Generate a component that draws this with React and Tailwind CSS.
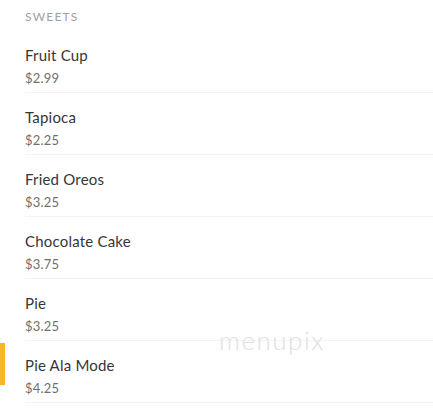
import React from 'react';

const items = [
  { name: 'Fruit Cup', price: '$2.99' },
  { name: 'Tapioca', price: '$2.25' },
  { name: 'Fried Oreos', price: '$3.25' },
  { name: 'Chocolate Cake', price: '$3.75' },
  { name: 'Pie', price: '$3.25' },
  { name: 'Pie Ala Mode', price: '$4.25', active: true },
];

const App = () => {
  return (
    <div
      className="relative w-[433px] h-[412px] overflow-hidden bg-white"
      style={{ fontFamily: 'Lato, "Open Sans", sans-serif' }}
    >
      <div className="h-[31px] pl-[25px] pt-[3px]">
        <span className="text-[12px] leading-[16px] tracking-[1.2px] text-[#a0a0a0] uppercase">Sweets</span>
      </div>
      {items.map((item) => (
        <div key={item.name} className="relative pl-[25px]">
          {item.active && <div className="absolute left-0 top-[2px] h-[42px] w-[5px] bg-[#f4b825]"></div>}
          <div className="border-b border-[#f3f3f3] pt-[14px] pb-[4px]">
            <div className="text-[15px] leading-[20px] tracking-[0.2px] text-[#363636]">{item.name}</div>
            <div className="mt-[3px] text-[13px] leading-[20px] tracking-[0.2px] text-[#707070]">{item.price}</div>
          </div>
        </div>
      ))}
      <div className="absolute left-[219px] top-[326px] text-[26px] leading-[28px] font-light tracking-[1.5px] text-[#e0e0e0]">
        menupix
      </div>
    </div>
  );
};

export default App;
